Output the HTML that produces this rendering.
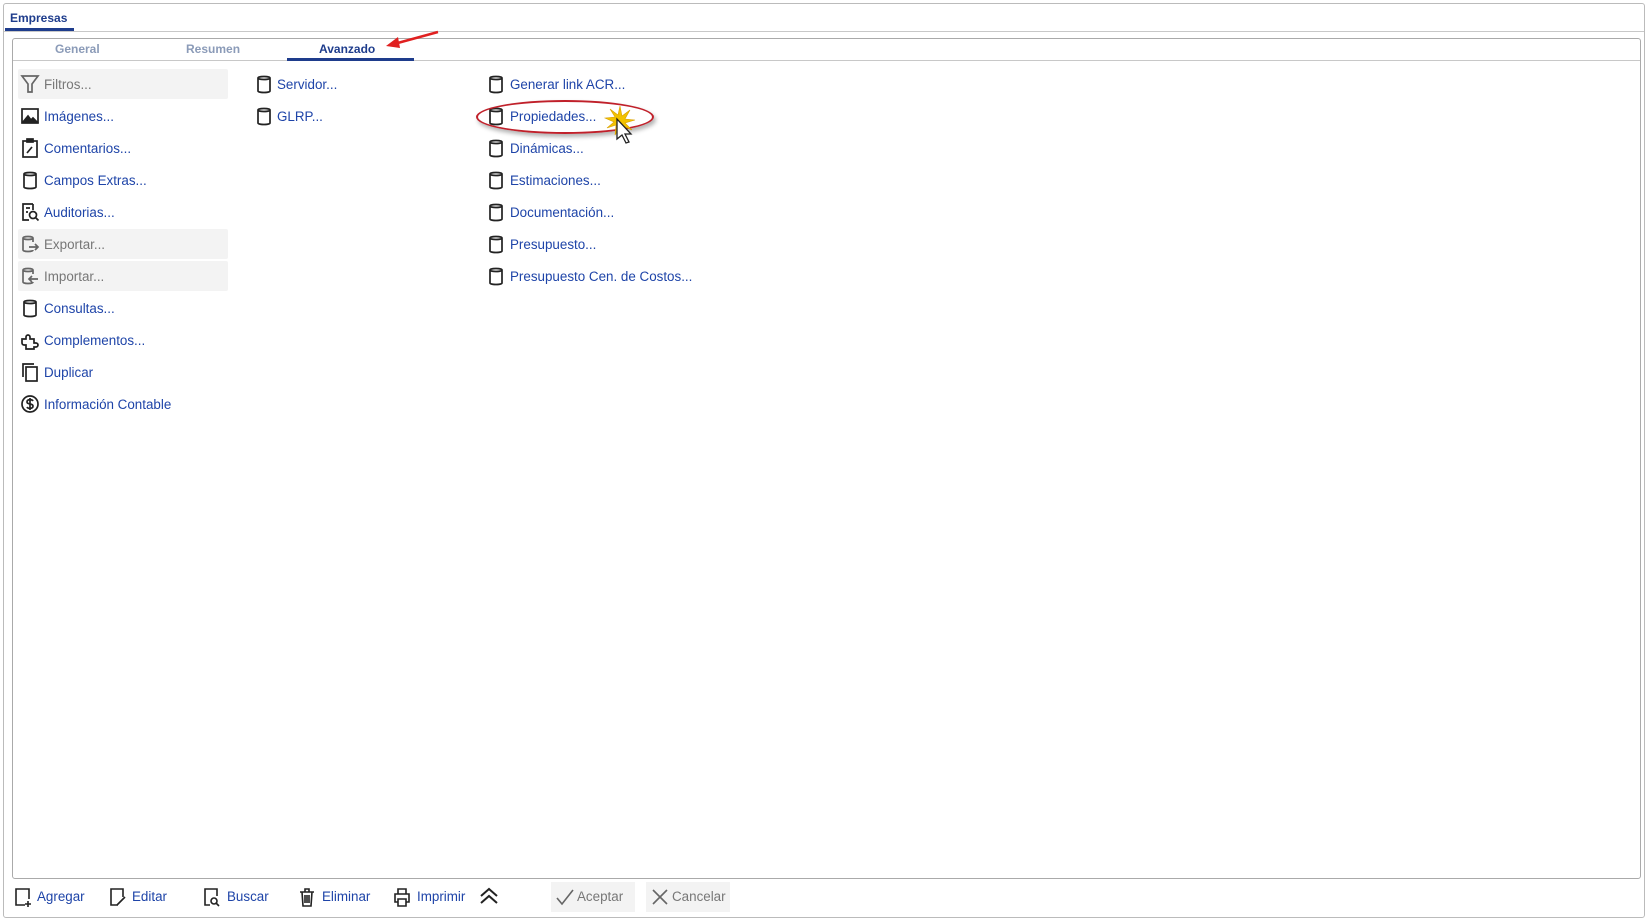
<!DOCTYPE html>
<html><head><meta charset="utf-8"><style>
*{margin:0;padding:0;box-sizing:border-box}
body{width:1648px;height:921px;background:#fff;position:relative;overflow:hidden;font-family:"Liberation Sans",sans-serif;font-size:13.4px;color:#1e44a8}
.a{position:absolute}
.it{position:absolute;height:30px;line-height:31px;white-space:nowrap}
.it svg{position:absolute;top:5px;width:20px;height:20px;fill:none;stroke:#222;stroke-width:1.7}
.g{background:#f3f3f3;color:#777;border-radius:2px}
.g svg{stroke:#666}
.tb{position:absolute;top:884px;height:26px;line-height:26px;white-space:nowrap}
.tb svg{position:absolute;top:3px;width:20px;height:20px;fill:none;stroke:#222;stroke-width:1.6}
</style></head><body>
<div class="a" style="left:3px;top:3px;width:1642px;height:915px;border:1px solid #bbb;border-radius:3px"></div>
<div class="a" style="left:4px;top:31px;width:1640px;border-top:1px solid #c8c8c8"></div>
<div class="a" style="left:10px;top:11px;font-size:12px;font-weight:bold;color:#1e3c8c">Empresas</div>
<div class="a" style="left:5px;top:28px;width:69px;height:3px;background:#1e3c8c"></div>
<div class="a" style="left:12px;top:38px;width:1629px;height:841px;border:1px solid #aaa;border-radius:3px"></div>
<div class="a" style="left:13px;top:60px;width:1627px;border-top:1px solid #c8c8c8"></div>
<div class="a" style="left:55px;top:42px;font-size:12px;font-weight:bold;color:#8b9bb8">General</div>
<div class="a" style="left:186px;top:42px;font-size:12px;font-weight:bold;color:#8b9bb8">Resumen</div>
<div class="a" style="left:319px;top:42px;font-size:12px;font-weight:bold;color:#1e3c8c">Avanzado</div>
<div class="a" style="left:287px;top:58px;width:127px;height:3px;background:#1e3c8c"></div>
<svg class="a" style="left:380px;top:28px" width="64" height="24"><line x1="58" y1="4" x2="14" y2="16" stroke="#e02020" stroke-width="2.5"/><polygon points="6,18 18,9 20,20" fill="#e02020"/></svg>

<div class="it g" style="left:18px;top:69px;width:210px;padding-left:26px"><svg style="left:2px" viewBox="0 0 20 20"><path d="M2 2h16l-6 8v8h-4v-8z"/></svg>Filtros...</div>
<div class="it" style="left:18px;top:101px;padding-left:26px"><svg style="left:2px" viewBox="0 0 20 20"><rect x="2" y="3" width="16" height="14"/><path d="M3 16l5-6 3 4 2-2 4 4z" fill="#222"/></svg>Imágenes...</div>
<div class="it" style="left:18px;top:133px;padding-left:26px"><svg style="left:2px" viewBox="0 0 20 20"><rect x="3" y="3" width="14" height="16"/><rect x="7" y="1" width="6" height="3" fill="#222"/><path d="M7 15l5-6"/></svg>Comentarios...</div>
<div class="it" style="left:18px;top:165px;padding-left:26px"><svg style="left:2px" viewBox="0 0 20 20"><path d="M4 4v13c0 2 12 2 12 0V4M4 4c0-2 12-2 12 0s-12 2-12 0"/></svg>Campos Extras...</div>
<div class="it" style="left:18px;top:197px;padding-left:26px"><svg style="left:2px" viewBox="0 0 20 20"><path d="M13 2H3v16h6M13 2v6"/><circle cx="13" cy="13" r="3.5"/><path d="M15.5 15.5l3 3M6 6h4M6 10h2"/></svg>Auditorias...</div>
<div class="it g" style="left:18px;top:229px;width:210px;padding-left:26px"><svg style="left:2px" viewBox="0 0 20 20"><path d="M3 4v12c0 2 10 2 10 0M3 4c0-2 10-2 10 0v4M3 4c0 2 10 2 10 0M9 13h9M15 10l3 3-3 3"/></svg>Exportar...</div>
<div class="it g" style="left:18px;top:261px;width:210px;padding-left:26px"><svg style="left:2px" viewBox="0 0 20 20"><path d="M3 4v12c0 2 10 2 10 0M3 4c0-2 10-2 10 0v4M3 4c0 2 10 2 10 0M9 13h9M12 10l-3 3 3 3"/></svg>Importar...</div>
<div class="it" style="left:18px;top:293px;padding-left:26px"><svg style="left:2px" viewBox="0 0 20 20"><path d="M4 4v13c0 2 12 2 12 0V4M4 4c0-2 12-2 12 0s-12 2-12 0"/></svg>Consultas...</div>
<div class="it" style="left:18px;top:325px;padding-left:26px"><svg style="left:2px" viewBox="0 0 20 20"><path d="M2 9h4V7a2 2 0 014 0v2h4v4h2a2 2 0 010 4h-2v2H6v-4H4a2 2 0 01-2-2z"/></svg>Complementos...</div>
<div class="it" style="left:18px;top:357px;padding-left:26px"><svg style="left:2px" viewBox="0 0 20 20"><path d="M3 15V2h11"/><rect x="6" y="5" width="11" height="14"/></svg>Duplicar</div>
<div class="it" style="left:18px;top:389px;padding-left:26px"><svg style="left:2px" viewBox="0 0 20 20"><circle cx="10" cy="10" r="8"/><path d="M13 7c-1-2-6-2-6 1s6 1 6 4-5 3-6 1M10 4v12"/></svg>Información Contable</div>

<div class="it" style="left:254px;top:69px;padding-left:23px"><svg style="left:0" viewBox="0 0 20 20"><path d="M4 4v13c0 2 12 2 12 0V4M4 4c0-2 12-2 12 0s-12 2-12 0"/></svg>Servidor...</div>
<div class="it" style="left:254px;top:101px;padding-left:23px"><svg style="left:0" viewBox="0 0 20 20"><path d="M4 4v13c0 2 12 2 12 0V4M4 4c0-2 12-2 12 0s-12 2-12 0"/></svg>GLRP...</div>

<div class="it" style="left:486px;top:69px;padding-left:24px"><svg style="left:0" viewBox="0 0 20 20"><path d="M4 4v13c0 2 12 2 12 0V4M4 4c0-2 12-2 12 0s-12 2-12 0"/></svg>Generar link ACR...</div>
<div class="it" style="left:486px;top:101px;padding-left:24px"><svg style="left:0" viewBox="0 0 20 20"><path d="M4 4v13c0 2 12 2 12 0V4M4 4c0-2 12-2 12 0s-12 2-12 0"/></svg>Propiedades...</div>
<div class="it" style="left:486px;top:133px;padding-left:24px"><svg style="left:0" viewBox="0 0 20 20"><path d="M4 4v13c0 2 12 2 12 0V4M4 4c0-2 12-2 12 0s-12 2-12 0"/></svg>Dinámicas...</div>
<div class="it" style="left:486px;top:165px;padding-left:24px"><svg style="left:0" viewBox="0 0 20 20"><path d="M4 4v13c0 2 12 2 12 0V4M4 4c0-2 12-2 12 0s-12 2-12 0"/></svg>Estimaciones...</div>
<div class="it" style="left:486px;top:197px;padding-left:24px"><svg style="left:0" viewBox="0 0 20 20"><path d="M4 4v13c0 2 12 2 12 0V4M4 4c0-2 12-2 12 0s-12 2-12 0"/></svg>Documentación...</div>
<div class="it" style="left:486px;top:229px;padding-left:24px"><svg style="left:0" viewBox="0 0 20 20"><path d="M4 4v13c0 2 12 2 12 0V4M4 4c0-2 12-2 12 0s-12 2-12 0"/></svg>Presupuesto...</div>
<div class="it" style="left:486px;top:261px;padding-left:24px"><svg style="left:0" viewBox="0 0 20 20"><path d="M4 4v13c0 2 12 2 12 0V4M4 4c0-2 12-2 12 0s-12 2-12 0"/></svg>Presupuesto Cen. de Costos...</div>

<div class="a" style="left:476px;top:100px;width:178px;height:34px;border:2px solid #c0202a;border-radius:50%;box-shadow:2px 3px 4px rgba(0,0,0,.3)"></div>
<svg class="a" style="left:600px;top:104px" width="40" height="46" viewBox="0 0 40 46"><path d="M20 2l2 10 8-6-5 9 10 1-10 3 7 7-9-4 1 10-4-9-5 8 1-10-9 3 7-6-9-4 10-1-5-8 8 6z" fill="#f2c200" stroke="#d9a000" stroke-width=".6"/><path d="M17 15v20l5-4 4 8 3-1-4-8h6z" fill="#fff" stroke="#222" stroke-width="1.3"/></svg>

<div class="tb" style="left:13px;padding-left:24px"><svg style="left:0" viewBox="0 0 20 20"><path d="M12 18H3V2h13v10M15 14v6M12 17h6"/></svg>Agregar</div>
<div class="tb" style="left:108px;padding-left:24px"><svg style="left:0" viewBox="0 0 20 20"><path d="M10 18H3V2h12v8M9 18l8-8"/></svg>Editar</div>
<div class="tb" style="left:202px;padding-left:25px"><svg style="left:0" viewBox="0 0 20 20"><path d="M8 18H3V2h12v7"/><circle cx="12" cy="14" r="3"/><path d="M14 16l3 3"/></svg>Buscar</div>
<div class="tb" style="left:297px;padding-left:25px"><svg style="left:0" viewBox="0 0 20 20"><path d="M3 5h14M8 5V2h4v3M5 5l1 14h8l1-14M8 8v8M10 8v8M12 8v8"/></svg>Eliminar</div>
<div class="tb" style="left:392px;padding-left:25px"><svg style="left:0" viewBox="0 0 20 20"><path d="M6 7V2h8v5M6 15H3V7h14v8h-3M6 12h8v7H6z"/></svg>Imprimir</div>
<svg class="a" style="left:478px;top:886px" width="22" height="20" viewBox="0 0 22 20" fill="none" stroke="#222" stroke-width="2"><path d="M3 10l8-7 8 7M3 17l8-7 8 7"/></svg>
<div class="tb" style="left:551px;width:84px;background:#f3f3f3;color:#777;padding-left:26px;height:30px;top:882px;line-height:30px"><svg style="left:4px;top:5px;stroke:#666" viewBox="0 0 20 20"><path d="M2 11l5 6L18 3"/></svg>Aceptar</div>
<div class="tb" style="left:646px;width:84px;background:#f3f3f3;color:#777;padding-left:26px;height:30px;top:882px;line-height:30px"><svg style="left:4px;top:5px;stroke:#666" viewBox="0 0 20 20"><path d="M3 3l14 14M17 3L3 17"/></svg>Cancelar</div>
</body></html>
